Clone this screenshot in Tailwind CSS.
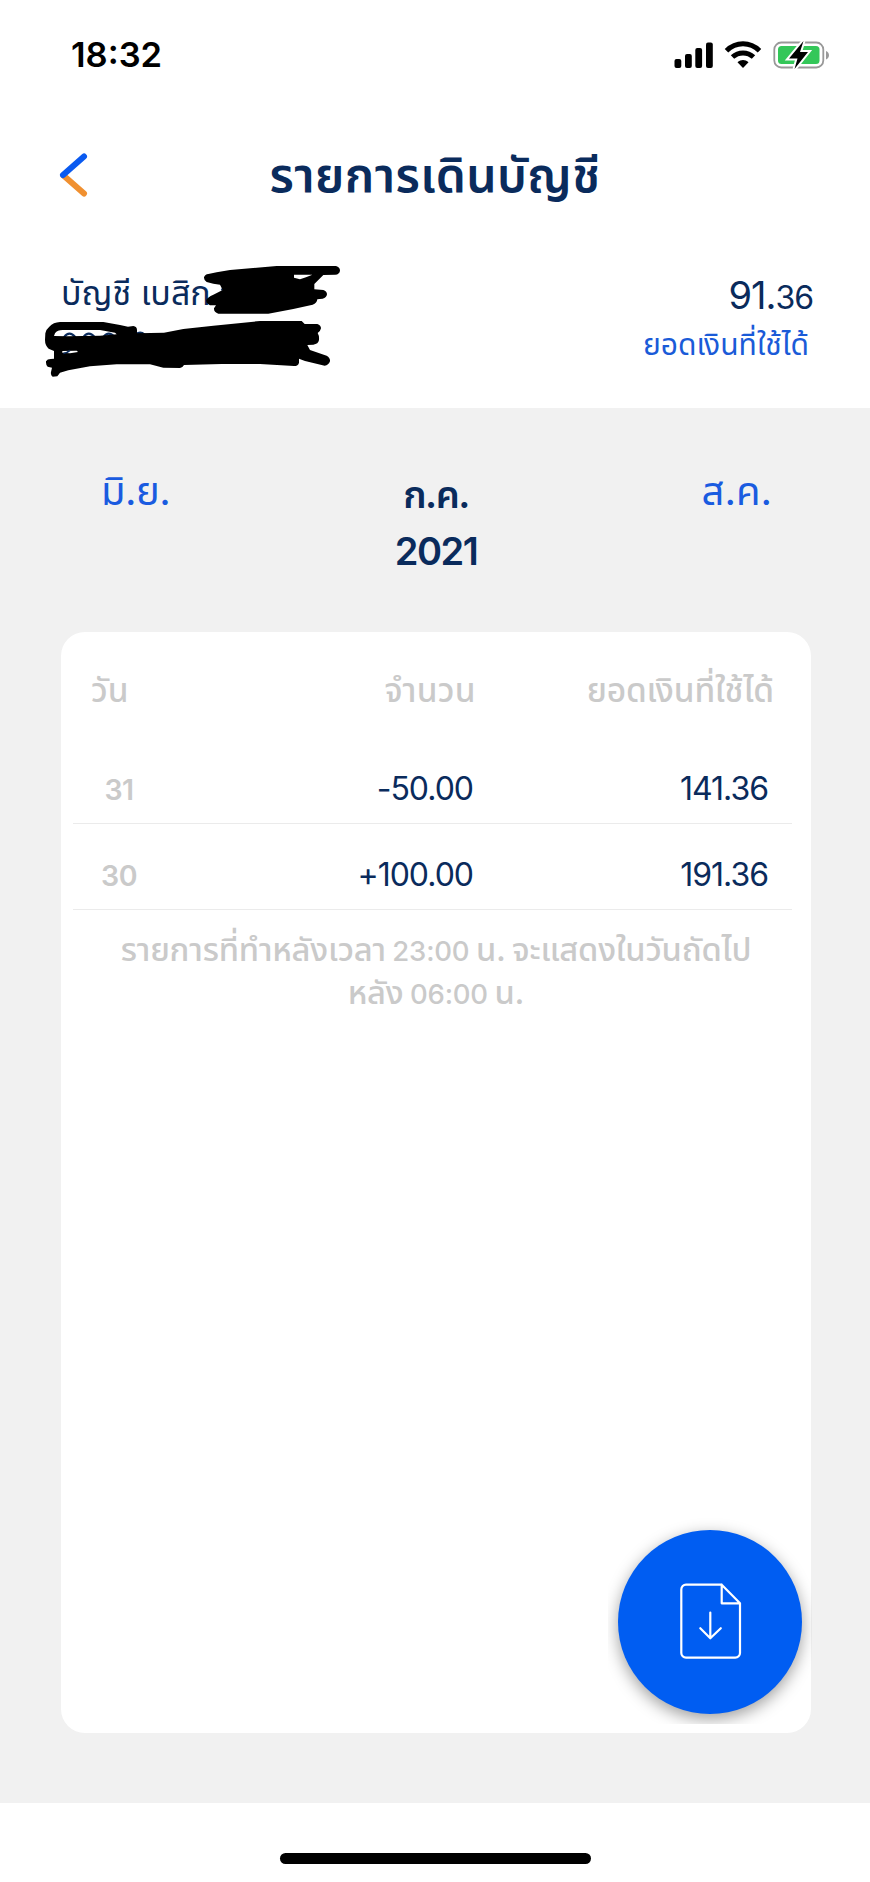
<!DOCTYPE html>
<html lang="th">
<head>
<meta charset="utf-8">
<meta name="viewport" content="width=device-width, initial-scale=1">
<title>รายการเดินบัญชี</title>
<script src="https://cdn.jsdelivr.net/npm/@tailwindcss/browser@4"></script>
</head>
<body class="relative w-[870px] h-[1882px] bg-white overflow-hidden font-['Inter','Noto_Sans_Thai',sans-serif] text-[#0a2b5c]">
<header class="relative h-[408px] flex flex-col">
  <div class="h-[110px] flex items-center justify-between pl-[71px] pr-[40px]">
    <span class="text-[34.5px] leading-[40px] font-semibold text-black">18:32</span>
    <svg width="156" height="30" viewBox="674 40 156 30">
      <g fill="#000"><rect x="674.5" y="59" width="6.8" height="9" rx="2"/><rect x="685" y="54" width="6.800" height="14" rx="2"/><rect x="695.300" y="48" width="6.800" height="20" rx="2"/><rect x="706" y="42.500" width="6.800" height="25.500" rx="2"/></g>
      <g fill="none" stroke="#000" stroke-width="5"><path d="M726.500 50.800C736 41.500 750 41.500 759.500 50.800"/><path d="M732.500 57C738.500 51.500 747.500 51.500 753.500 57"/></g>
      <path d="M737.500 62.300C741 59.300 745 59.300 748.500 62.300L743 68Z"/>
      <rect x="774.300" y="42.500" width="49" height="25" rx="7" fill="#fff" stroke="#999" stroke-width="1.800"/>
      <rect x="778" y="46" width="41.500" height="18" rx="3.500" fill="#34c759"/>
      <path d="M826 51v8.500c4-1.500 4-7 0-8.500z" fill="#999"/>
      <path d="M803.500 41L789 58.500h8.500L794.500 69L808 52h-8z" fill="#000" stroke="#fff" stroke-width="4" paint-order="stroke"/>
    </svg>
  </div>
  <div class="h-[130px] grid grid-cols-[100px_1fr_100px] items-center">
    <svg class="ml-[56px]" width="36" height="50" viewBox="56 150 36 50" fill="none" stroke-width="6" stroke-linecap="round"><path d="M63.500 175.500L84 193.500" stroke="#f09030"/><path d="M63 175L84 156.500" stroke="#0a5af0"/></svg>
    <h1 class="-mt-px text-center text-[48px] leading-[60px] font-semibold tracking-[0.4px]">รายการเดินบัญชี</h1>
  </div>
  <div class="flex justify-between pl-[61px] pr-[57px] pt-[28px]">
    <p class="text-[34px] leading-[50px]">บัญชี เบสิก</p>
    <div class="text-right">
      <p class="text-[38px] leading-[54px] tracking-[-1px]">91.<span class="text-[32px] leading-none">36</span></p>
      <p class="text-[30px] leading-[44px] text-[#1a5bd8] pr-[4px]">ยอดเงินที่ใช้ได้</p>
    </div>
  </div>
  <!-- hand-drawn redaction over the account name and number -->
  <svg class="absolute left-0 top-[240px]" width="435" height="180" viewBox="0 0 1305 540">
    <g fill="none" stroke="#0a2b5c" stroke-width="7"><path d="M192 292Q208 270 226 292M250 292Q266 270 284 292M310 292Q326 270 344 292M408 284Q420 272 434 284M190 340Q200 340 210 330M664 150L672 146"/></g>
    <path d="M625 102L650 97L690 90L770 83L830 78L1008 78Q1020 82 1020 92Q1018 103 1006 104L970 105L943 132L943 148L970 150Q981 154 981 163Q980 173 968 176L952 178Q951 190 938 194L880 207L805 221L655 221Q641 217 642 205L648 196L630 196Q617 190 619 180Q622 172 640 164L668 150L660 134L640 131L620 126Q611 120 612 112Q615 103 625 102ZM882 104L882 113L900 118L918 112L937 104Z" fill="#000" fill-rule="evenodd"/>
    <path d="M148 260Q160 247 180 246L310 246L360 255L384 260L400 258Q411 260 411 270L411 280L492 278L550 267L640 257L780 243L905 243L914 252L952 252Q963 256 963 265Q961 275 953 279Q958 287 957 300Q955 312 940 314L922 315L930 330L980 347Q991 353 990 364Q986 376 974 377L915 363L897 356L897 368Q895 378 882 378L780 372L665 372L552 375Q548 383 540 384L490 383L450 373L350 373L270 379L205 391L180 398L172 409L158 410Q151 405 153 396L156 383L143 380Q137 374 138 364Q142 357 152 357L162 356L162 333L146 326Q135 316 135 300L136 280Q138 268 148 260ZM162 288L165 280Q172 270 188 270L300 270L345 278L350 283L300 287L250 288L200 289Z" fill="#000" fill-rule="evenodd"/>
    <path d="M187 333L187 338L210 340L234 336L230 332Z" fill="#fff"/><path d="M190 340Q200 340 210 331" fill="none" stroke="#0a2b5c" stroke-width="5"/>
  </svg>
</header>
<main class="h-[1395px] bg-[#f1f1f1] pl-[61px] pr-[59px] pt-[58px]">
  <nav class="h-[166px] grid grid-cols-3 text-[40px] leading-[57px] text-[#1a5be0]">
    <span class="-mt-[4px] pl-[40px] tracking-[-0.5px]">มิ.ย.</span>
    <span class="text-center text-[38px] font-semibold text-[#0a2b5c]"><span class="tracking-[-1.5px]">ก.ค.</span><br><span class="tracking-[-1.5px]">2021</span></span>
    <span class="-mt-[4px] text-right pr-[39px]">ส.ค.</span>
  </nav>
  <section class="h-[1101px] bg-white rounded-[24px] pl-[12px] pr-[19px]">
    <div class="h-[106px] pt-[10px] grid grid-cols-[92px_311px_1fr] text-[33.5px] leading-[97px] font-medium text-[#cacaca]">
      <span class="pl-[18px]">วัน</span>
      <span class="text-right tracking-[0.3px]">จำนวน</span>
      <span class="text-right pr-[18px] tracking-[-0.15px]">ยอดเงินที่ใช้ได้</span>
    </div>
    <div class="h-[86px] pt-[14px] border-b border-[#ebebeb] grid grid-cols-[92px_310px_1fr] items-baseline text-[32px] leading-[73px] tracking-[-1px]">
      <span class="text-center text-[28.5px] leading-[60px] font-semibold text-[#cacaca] tracking-[-0.5px]">31</span>
      <span class="text-right pr-[2px]">-50.00</span>
      <span class="text-right pr-[24px]">141.36</span>
    </div>
    <div class="h-[86px] pt-[14px] border-b border-[#ebebeb] grid grid-cols-[92px_310px_1fr] items-baseline text-[32px] leading-[73px] tracking-[-1px]">
      <span class="text-center text-[28.5px] leading-[60px] font-semibold text-[#cacaca] tracking-[-0.5px]">30</span>
      <span class="text-right pr-[2px]">+100.00</span>
      <span class="text-right pr-[24px]">191.36</span>
    </div>
    <p class="pt-[18px] pl-[7px] text-center text-[32.7px] leading-[43px] font-medium text-[#cacaca] whitespace-nowrap tracking-[-0.2px] [word-spacing:-2px]">รายการที่ทำหลังเวลา <span class="text-[27.5px] leading-none">23:00</span> น. จะแสดงในวันถัดไป<br>หลัง <span class="text-[27.5px] leading-none">06:00</span> น.</p>
  </section>
</main>
<div class="absolute left-[608px] top-[1510px] w-[204px] h-[214px] overflow-hidden pl-[10px] pt-[20px]">
  <button class="block w-[184px] h-[184px] rounded-full bg-[#005df2] shadow-[0_5px_16px_rgba(0,0,0,0.38)]">
    <svg width="184" height="184" viewBox="618 1530 184 184" fill="none" stroke="#fff" stroke-width="2.200" stroke-linejoin="round" stroke-linecap="round"><path d="M721.700 1584.700H686a4.700 4.700 0 0 0-4.700 4.700V1653a4.700 4.700 0 0 0 4.700 4.700H735.300a4.700 4.700 0 0 0 4.700-4.700V1603.300L721.700 1584.700V1603.300H740"/><path d="M710.300 1612.500V1638.300M700.300 1628.200L710.300 1638.300L720.800 1628.200"/></svg>
  </button>
</div>
<footer class="h-[79px] pt-[50px] flex justify-center items-start"><div class="w-[311px] h-[11px] rounded-full bg-black"></div></footer>
</body>
</html>
